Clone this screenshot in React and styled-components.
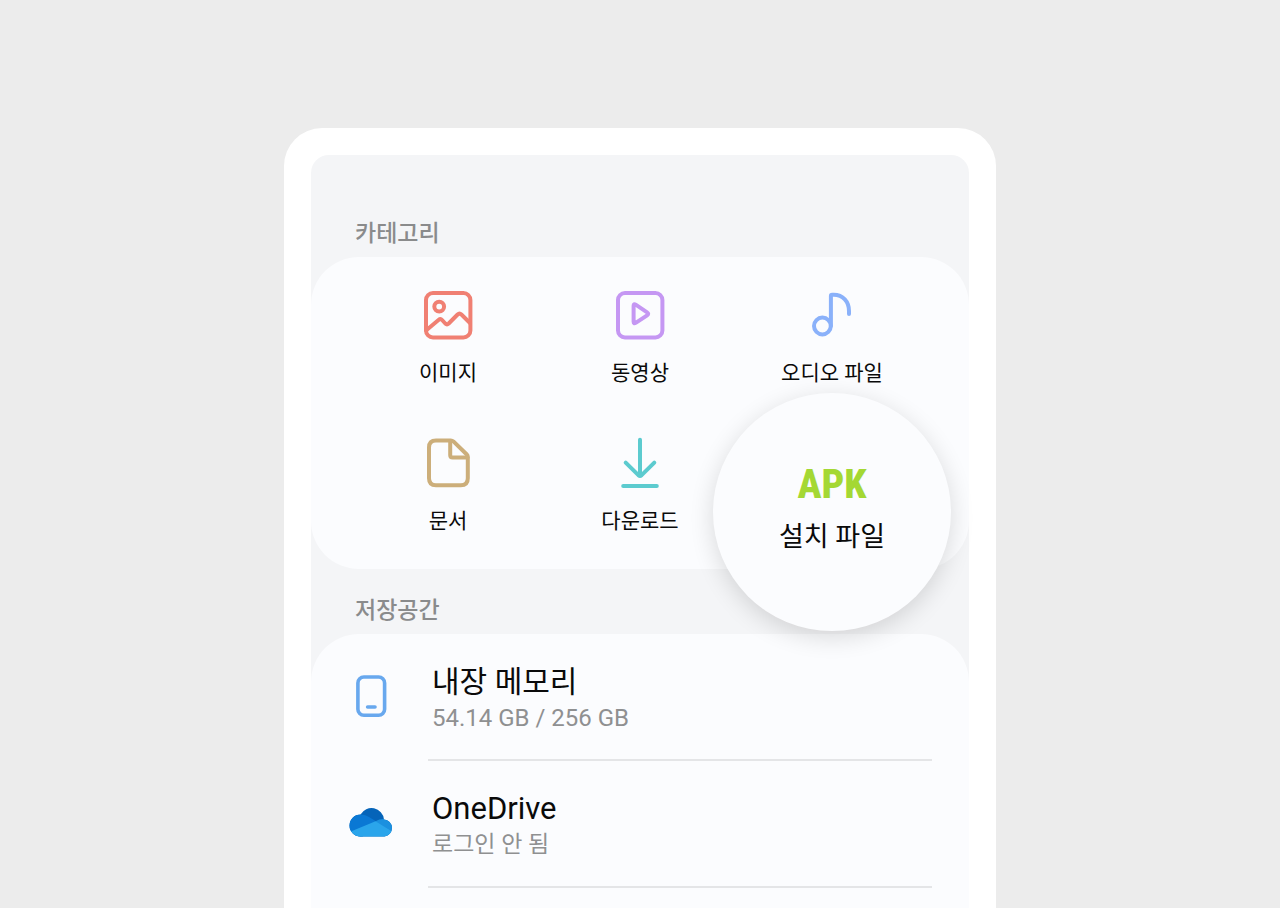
import React from "react";
import styled, { createGlobalStyle } from "styled-components";

const GlobalStyle = createGlobalStyle`
  *, *::before, *::after { box-sizing: border-box; }
  body {
    margin: 0;
    background: #ececec;
    font-family: Roboto, "Noto Sans CJK KR", sans-serif;
    color: #0a0a0a;
  }
`;

const Page = styled.main`
  height: 100vh;
  overflow: hidden;
  display: flex;
  flex-direction: column;
  align-items: center;
  padding: 128px 16px 0;
`;

const Phone = styled.div`
  flex: 1 0 auto;
  display: flex;
  width: 100%;
  max-width: 712px;
  padding: 27px 27px 0;
  background: #ffffff;
  border-radius: 38px 38px 0 0;
`;

const Screen = styled.div`
  flex: 1;
  display: flex;
  flex-direction: column;
  min-width: 0;
  padding-top: 37px;
  background: #f4f5f7;
  border-radius: 18px 18px 0 0;
`;

const SectionTitle = styled.h2`
  margin: 0;
  padding: 26px 44px 7px;
  font-size: 23px;
  line-height: 32px;
  font-weight: 500;
  color: #8a8b8c;
`;

const CategoryGrid = styled.div`
  display: grid;
  grid-template-columns: repeat(3, 1fr);
  row-gap: 48px;
  padding: 32px 41px;
  background: #fbfcfe;
  border-radius: 48px;
`;

const Cell = styled.div`
  position: relative;
  display: flex;
  justify-content: center;
`;

const CategoryButton = styled.button`
  display: flex;
  flex-direction: column;
  align-items: center;
  gap: 16px;
  padding: 0;
  border: 0;
  background: none;
  font: inherit;
  font-size: 21px;
  line-height: 32px;
  color: inherit;
  white-space: nowrap;
  cursor: pointer;
`;

const Spotlight = styled.button`
  position: absolute;
  z-index: 1;
  top: -44px;
  left: 50%;
  margin-left: -119px;
  width: 238px;
  height: 238px;
  display: flex;
  flex-direction: column;
  align-items: center;
  justify-content: center;
  gap: 12px;
  padding: 0 0 2px;
  border: 0;
  border-radius: 50%;
  background: #fbfcfe;
  box-shadow: 0 6px 24px rgba(0, 0, 0, 0.14);
  font: inherit;
  font-size: 27px;
  line-height: 40px;
  color: inherit;
  cursor: pointer;
`;

const ApkMark = styled.span`
  font-family: "Roboto Condensed", "Liberation Sans Narrow", "Liberation Sans", sans-serif;
  font-size: 40px;
  line-height: 40px;
  font-weight: 800;
  color: #a4d834;
`;

const StorageList = styled.ul`
  flex: 1;
  margin: 0;
  padding: 0 37px 0 38px;
  list-style: none;
  background: #fbfcfe;
  border-radius: 48px 48px 0 0;
`;

const StorageRow = styled.li`
  display: flex;
  gap: 35px;
`;

const StorageIcon = styled.span`
  display: flex;
  padding-top: 40px;
`;

const StorageText = styled.div`
  flex: 1;
  padding: 28px 4px 25px;
  border-bottom: 2px solid #e4e5e7;
`;

const StorageName = styled.div`
  font-size: ${({ $latin }) => ($latin ? 31 : 30)}px;
  line-height: 40px;
`;

const StorageNote = styled.div`
  font-size: ${({ $latin }) => ($latin ? 24 : 23)}px;
  line-height: 32px;
  color: #8f9091;
`;

const LineIcon = ({ color, size = 52, width = 4, children }) => (
  <svg
    width={size}
    height={size}
    viewBox={`0 0 ${size} ${size}`}
    fill="none"
    stroke={color}
    strokeWidth={width}
    strokeLinecap="round"
    strokeLinejoin="round"
    aria-hidden="true"
  >
    {children}
  </svg>
);

const ImageIcon = () => (
  <LineIcon color="#f08073">
    <rect x="4" y="4" width="44.400" height="44.400" rx="7" />
    <circle cx="17.2" cy="17.6" r="4.9" />
    <path d="M4 41.500 16.500 31q2-1.700 3.600 0l3.200 3.500q1.700 1.600 3.400 0L35.600 25.500q1.900-1.800 3.800 0L48 34" />
  </LineIcon>
);

const VideoIcon = () => (
  <LineIcon color="#c597f3">
    <rect x="4" y="4" width="44.400" height="44.400" rx="7" />
    <path d="M19.600 16.800q0-2.400 2.100-1.100l11.400 7.600q2.200 1.500 0 3L21.700 33.800q-2.100 1.200-2.100-1.100z" />
  </LineIcon>
);

const AudioIcon = () => (
  <LineIcon color="#8ab1fa">
    <circle cx="16.4" cy="37" r="8.4" />
    <path d="M24.900 37V7q0-1.200 1.200-1.200h1.500C37 5.800 43 12.500 43 22v3" />
  </LineIcon>
);

const DocumentIcon = () => (
  <LineIcon color="#ccae7a">
    <path d="M14 3.400h14.800q1.500 0 2.600 1L44.800 17.500q1 1 1 2.400V41.300q0 7-7 7H14q-7 0-7-7V10.400q0-7 7-7z" />
    <path d="M28.200 4v14q0 2.500 2.500 2.500H45.500" />
  </LineIcon>
);

const DownloadIcon = () => (
  <LineIcon color="#5ccbcf">
    <path d="M26 2.700V38M11.700 25.600l12.700 12.600q1.600 1.400 3.200 0l12.700-12.600M9.200 49h33.600" />
  </LineIcon>
);

const PhoneIcon = () => (
  <LineIcon color="#68a8ee" size={44} width={3.6}>
    <rect x="8.900" y="3" width="26.700" height="38.200" rx="6" />
    <path d="M18.600 33h7.400" />
  </LineIcon>
);

const CloudIcon = () => (
  <svg width="44" height="44" viewBox="0 0 44 44" aria-hidden="true">
    <defs>
      <clipPath id="cloud">
        <path d="M11.500 35.500A11 11 0 0 1 11.500 13.500A12.600 12.600 0 0 1 35 18.400A8.600 8.600 0 0 1 35.500 35.500Z" />
      </clipPath>
    </defs>
    <g clipPath="url(#cloud)">
      <path fill="#0564b9" d="M0 0h44v44H0z" />
      <path fill="#0a78d4" d="M0 13.500h11Q16 13 20 16l7 4.200L10 40H0z" />
      <path fill="#1b90df" d="M26.500 20.200Q31 17.500 36 18.100L44 17v18l-4 1z" />
      <path fill="#2aa5eb" d="M0 31.200 26.500 20.200 44 31v8H0z" />
    </g>
  </svg>
);

const categories = [
  { label: "이미지", Icon: ImageIcon },
  { label: "동영상", Icon: VideoIcon },
  { label: "오디오 파일", Icon: AudioIcon },
  { label: "문서", Icon: DocumentIcon },
  { label: "다운로드", Icon: DownloadIcon },
];

const storages = [
  { name: "내장 메모리", note: "54.14 GB / 256 GB", Icon: PhoneIcon },
  { name: "OneDrive", note: "로그인 안 됨", Icon: CloudIcon },
];

const isLatin = (text) => /^[\x20-\x7e]+$/.test(text);

export default function App() {
  return (
    <>
      <GlobalStyle />
      <Page>
        <Phone>
          <Screen>
            <SectionTitle>카테고리</SectionTitle>
            <CategoryGrid>
              {categories.map(({ label, Icon }) => (
                <Cell key={label}>
                  <CategoryButton type="button">
                    <Icon />
                    {label}
                  </CategoryButton>
                </Cell>
              ))}
              <Cell>
                <Spotlight type="button">
                  <ApkMark>APK</ApkMark>
                  설치 파일
                </Spotlight>
              </Cell>
            </CategoryGrid>
            <SectionTitle>저장공간</SectionTitle>
            <StorageList>
              {storages.map(({ name, note, Icon }) => (
                <StorageRow key={name}>
                  <StorageIcon>
                    <Icon />
                  </StorageIcon>
                  <StorageText>
                    <StorageName $latin={isLatin(name)}>{name}</StorageName>
                    <StorageNote $latin={isLatin(note)}>{note}</StorageNote>
                  </StorageText>
                </StorageRow>
              ))}
            </StorageList>
          </Screen>
        </Phone>
      </Page>
    </>
  );
}
